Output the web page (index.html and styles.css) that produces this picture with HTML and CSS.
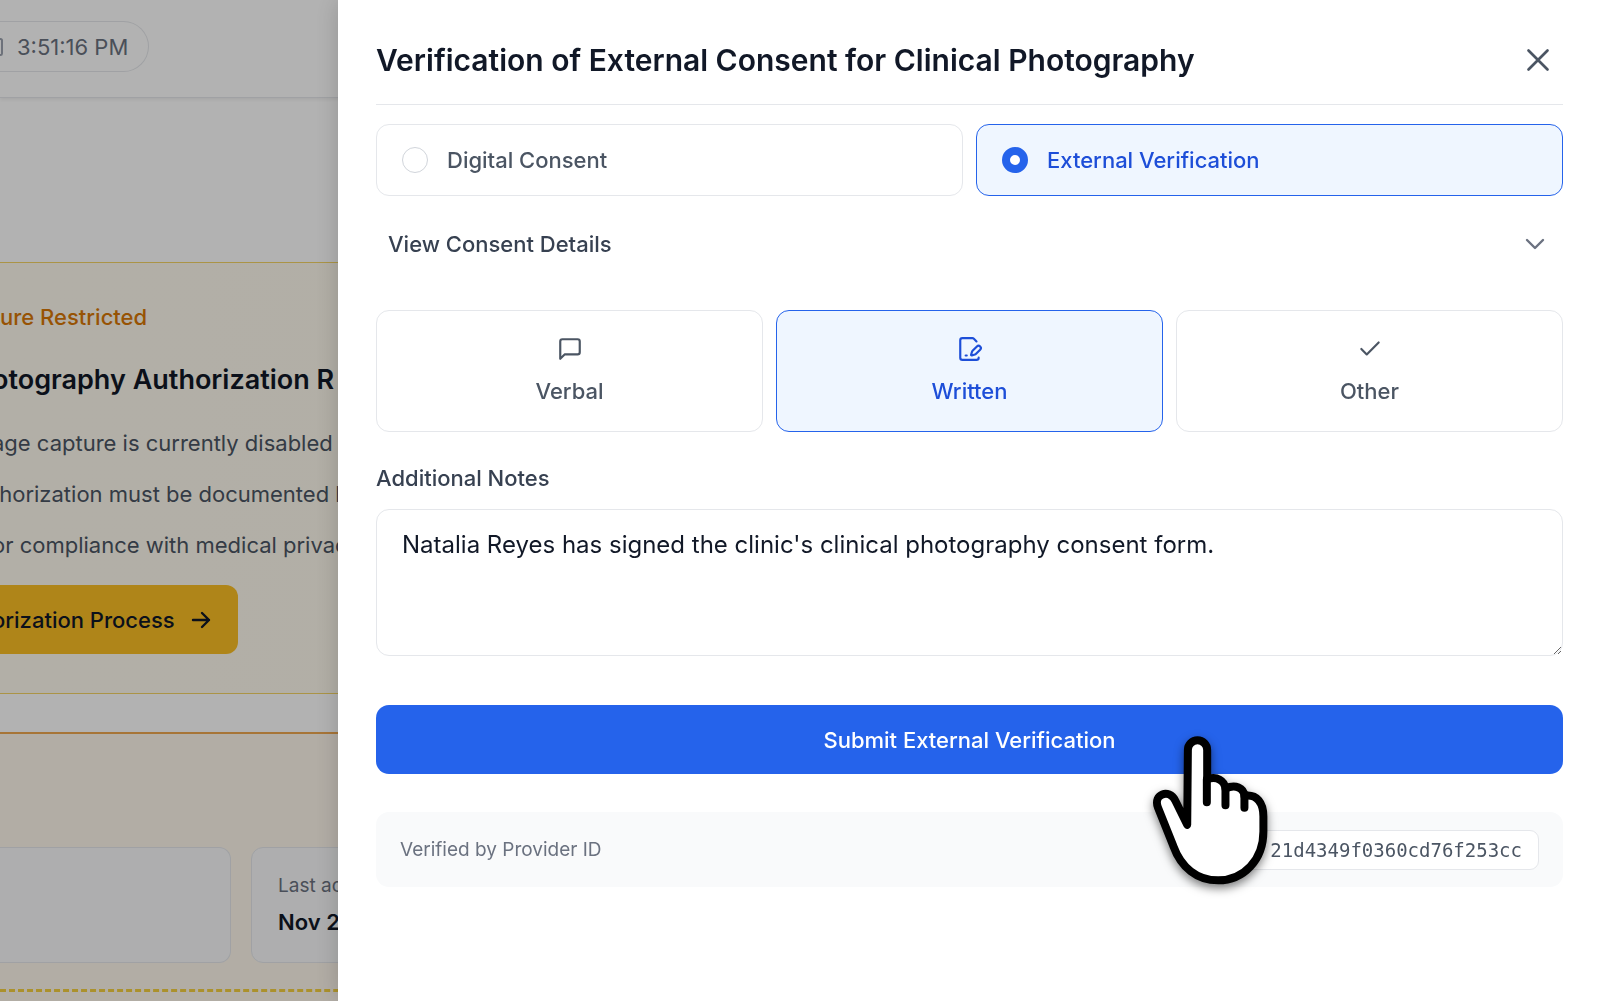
FILE: index.html
```html
<!DOCTYPE html>
<html lang="en">
<head>
    <meta charset="UTF-8">
    <meta name="viewport" content="width=device-width, initial-scale=1.0">
    <title>Clinical Photography Consent</title>
    <link rel="stylesheet" href="styles.css">
</head>
<body>
    <div class="page">
        <header class="topbar">
            <div class="clock">
                <svg class="clock-icon" width="3" height="18" viewBox="0 0 3 18" fill="none" stroke="#9ca3af" stroke-width="2"><path d="M0 1h0.5a1.5 1.5 0 0 1 1.5 1.5v13a1.5 1.5 0 0 1-1.5 1.5H0"/></svg>
                <span>3:51:16 PM</span>
            </div>
        </header>
        <section class="restricted">
            <p class="restricted-tag">ure Restricted</p>
            <div class="restricted-body">
                <h2>otography Authorization R</h2>
                <p class="restricted-text">age capture is currently disabled</p>
                <p class="restricted-text">thorization must be documented b</p>
                <p class="restricted-text">or compliance with medical privac</p>
                <button class="process-btn" type="button">
                    orization Process
                    <svg width="24" height="24" viewBox="0 0 24 24" fill="none" stroke="currentColor" stroke-width="2.4" stroke-linecap="round" stroke-linejoin="round"><path d="M4 12h16M13 5l7 7-7 7"/></svg>
                </button>
            </div>
        </section>
        <section class="activity">
            <div class="activity-cards">
                <div class="activity-card"></div>
                <div class="activity-card">
                    <span class="activity-label">Last ac</span>
                    <strong>Nov 2</strong>
                </div>
            </div>
            <div class="activity-line"></div>
        </section>
    </div>

    <div class="overlay">
        <form class="drawer">
            <div class="drawer-header">
                <h1>Verification of External Consent for Clinical Photography</h1>
                <button class="close-btn" type="button" aria-label="Close">
                    <svg width="38" height="38" viewBox="0 0 24 24" fill="none" stroke="currentColor" stroke-width="1.7" stroke-linecap="round"><path d="M18 6 6 18M6 6l12 12"/></svg>
                </button>
            </div>

            <div class="consent-types">
                <label class="consent-type">
                    <input type="radio" name="type" value="digital">
                    Digital Consent
                </label>
                <label class="consent-type selected">
                    <input type="radio" name="type" value="external" checked>
                    External Verification
                </label>
            </div>

            <button class="details-btn" type="button">
                View Consent Details
                <svg width="32" height="32" viewBox="0 0 24 24" fill="none" stroke="currentColor" stroke-width="1.8" stroke-linecap="round" stroke-linejoin="round"><path d="m6 9 6 6 6-6"/></svg>
            </button>

            <div class="methods">
                <button class="method" type="button">
                    <svg width="26" height="26" viewBox="0 0 24 24" fill="none" stroke="currentColor" stroke-width="2" stroke-linecap="round" stroke-linejoin="round"><path d="M21 15a2 2 0 0 1-2 2H7l-4 4V5a2 2 0 0 1 2-2h14a2 2 0 0 1 2 2z"/></svg>
                    Verbal
                </button>
                <button class="method selected" type="button">
                    <svg width="26" height="26" viewBox="0 0 24 24" fill="none" stroke="currentColor" stroke-width="2" stroke-linecap="round" stroke-linejoin="round"><path d="m18 5-2.414-2.414A2 2 0 0 0 14.172 2H5a2 2 0 0 0-2 2v16a2 2 0 0 0 2 2h13a2 2 0 0 0 2-2"/><path d="M21.378 12.626a1 1 0 0 0-3.004-3.004l-4.01 4.012a2 2 0 0 0-.506.854l-.837 2.87a.5.5 0 0 0 .62.62l2.87-.837a2 2 0 0 0 .854-.506z"/><path d="M8 18h1"/></svg>
                    Written
                </button>
                <button class="method" type="button">
                    <svg width="26" height="26" viewBox="0 0 24 24" fill="none" stroke="currentColor" stroke-width="2" stroke-linecap="round" stroke-linejoin="round"><path d="M20 6 9 17l-5-5"/></svg>
                    Other
                </button>
            </div>

            <label class="notes-label" for="notes">Additional Notes</label>
            <textarea class="notes" id="notes" spellcheck="false">Natalia Reyes has signed the clinic's clinical photography consent form.</textarea>

            <div class="submit-row">
                <button class="submit-btn" type="submit">Submit External Verification</button>
                <svg class="hand" width="127" height="163" viewBox="140 270 380 490" fill="#fff" stroke="#000" stroke-width="24" stroke-linecap="round" stroke-linejoin="round">
                    <path d="M262 330a29 29 0 0 1 58 0V418C350 408 372 422 375 446C405 432 430 444 432 468C470 462 489 490 489 530V575C489 660 430 722 353 722C290 722 242 684 218 618L172 503C157 463 205 445 224 482L260 555Z"/>
                    <path d="M319 418v69M375 446v50M432 468v36" fill="none"/>
                </svg>
            </div>

            <div class="provider">
                <span>Verified by Provider ID</span>
                <code>21d4349f0360cd76f253cc</code>
            </div>
        </form>
    </div>
</body>
</html>
```
FILE: styles.css
```css
* {
    box-sizing: border-box;
}
body {
    margin: 0;
    font-family: Inter, 'Liberation Sans', sans-serif;
    font-size: 22px;
    line-height: 28px;
    color: #111827;
    background: #fff;
    overflow: hidden;
}
h1, h2, p {
    margin: 0;
}
button {
    font: inherit;
    color: inherit;
    border: none;
    background: none;
    padding: 0;
    cursor: pointer;
}
svg {
    flex-shrink: 0;
}

/* page behind the drawer */
.page {
    min-height: 100vh;
    white-space: nowrap;
}
.topbar {
    display: flex;
    align-items: center;
    height: 98px;
    padding-bottom: 4px;
    border-bottom: 1px solid #e5e7eb;
    box-shadow: 0 2px 3px rgba(0, 0, 0, 0.06);
}
.clock {
    display: flex;
    align-items: center;
    gap: 14px;
    height: 51px;
    padding-right: 20px;
    border: 1px solid #e5e7eb;
    border-left: none;
    border-radius: 0 26px 26px 0;
    color: #6b7280;
}
.restricted {
    margin-top: 164px;
    height: 432px;
    padding-top: 40px;
    border: solid #f5d565;
    border-width: 1px 0;
    background: linear-gradient(90deg, #fffbf0, #fffae8);
}
.restricted-tag {
    font-weight: 500;
    color: #d97706;
}
.restricted-body {
    margin-left: -8px;
}
.restricted h2 {
    margin: 29px 0 18px;
    font-size: 27px;
    font-weight: 600;
    line-height: 40px;
}
.restricted-text {
    line-height: 51px;
    color: #4b5563;
}
.process-btn {
    display: flex;
    align-items: center;
    gap: 14px;
    height: 69px;
    margin-top: 14px;
    padding-right: 25px;
    border-radius: 0 12px 12px 0;
    background: #fbbf24;
    font-weight: 500;
}
.activity {
    margin-top: 38px;
    padding-top: 113px;
    height: 290px;
    border-top: 2px solid #f0a850;
    background: #fff8ed;
}
.activity-cards {
    display: grid;
    grid-template-columns: 231px 1fr;
    gap: 20px;
}
.activity-card {
    display: flex;
    flex-direction: column;
    gap: 8px;
    height: 116px;
    padding: 24px 26px;
    border: 1px solid #e5e7eb;
    border-radius: 12px;
    background: #f9fafb;
}
.activity-card:first-child {
    border-left: none;
    border-radius: 0 12px 12px 0;
}
.activity-label {
    font-size: 19px;
    color: #6b7280;
}
.activity-card strong {
    font-weight: 600;
}
.activity-line {
    margin-top: 26px;
    border-top: 3px dashed #f5d040;
}

/* drawer */
.overlay {
    position: fixed;
    inset: 0;
    padding-left: 338px;
    background: rgba(0, 0, 0, 0.3);
}
.drawer {
    height: 100%;
    padding: 0 37px 0 38px;
    background: #fff;
    box-shadow: 0 0 24px rgba(0, 0, 0, 0.18);
}
.drawer-header {
    display: flex;
    align-items: center;
    justify-content: space-between;
    padding: 36px 6px 20px 0;
    border-bottom: 1px solid #e5e7eb;
}
.drawer-header h1 {
    font-size: 30px;
    font-weight: 600;
    line-height: 48px;
}
.close-btn {
    height: 38px;
    color: #4b5563;
}
.consent-types {
    display: grid;
    grid-template-columns: 1fr 1fr;
    gap: 13px;
    margin-top: 19px;
}
.consent-type {
    display: flex;
    align-items: center;
    gap: 19px;
    height: 72px;
    padding: 0 25px;
    border: 1px solid #e5e7eb;
    border-radius: 13px;
    font-weight: 500;
    color: #4b5563;
}
.consent-type input {
    appearance: none;
    width: 26px;
    height: 26px;
    margin: 0;
    border: 1px solid #d1d5db;
    border-radius: 50%;
    background: #fff;
}
.consent-type input:checked {
    border: 8px solid #2563eb;
}
.consent-type.selected,
.method.selected {
    border-color: #2563eb;
    background: #eff6ff;
    color: #1d4ed8;
}
.details-btn {
    display: flex;
    align-items: center;
    justify-content: space-between;
    width: 100%;
    height: 56px;
    margin: 20px 0 38px;
    padding: 0 12px;
    font-weight: 500;
    color: #374151;
}
.details-btn svg {
    color: #6b7280;
}
.methods {
    display: grid;
    grid-template-columns: repeat(3, 1fr);
    gap: 13px;
}
.method {
    display: flex;
    flex-direction: column;
    align-items: center;
    justify-content: center;
    gap: 15px;
    height: 122px;
    padding-bottom: 2px;
    border: 1px solid #e5e7eb;
    border-radius: 13px;
    font-weight: 500;
    color: #4b5563;
}
.notes-label {
    display: block;
    margin: 32px 0 17px;
    font-weight: 500;
    color: #374151;
}
.notes {
    display: block;
    width: 100%;
    height: 147px;
    padding: 17px 25px;
    border: 1px solid #e5e7eb;
    border-radius: 13px;
    font: inherit;
    font-size: 24px;
    line-height: 36px;
    color: #111827;
    resize: vertical;
}
.submit-row {
    position: relative;
    margin: 49px 0 38px;
}
.submit-btn {
    display: block;
    width: 100%;
    height: 69px;
    border-radius: 13px;
    background: #2563eb;
    font-weight: 500;
    color: #fff;
}
.hand {
    position: absolute;
    right: 289px;
    top: 25px;
    overflow: visible;
    filter: drop-shadow(0 4px 5px rgba(0, 0, 0, 0.5));
    pointer-events: none;
}
.provider {
    display: flex;
    align-items: center;
    justify-content: space-between;
    height: 75px;
    padding: 0 24px;
    border-radius: 13px;
    background: #f9fafb;
    font-size: 19px;
    color: #6b7280;
}
.provider code {
    min-width: 300px;
    padding: 5px 16px;
    border: 1px solid #e5e7eb;
    border-radius: 9px;
    background: #fff;
    font-family: 'DejaVu Sans Mono', 'Liberation Mono', monospace;
    font-size: 19px;
    text-align: right;
    color: #4b5563;
}
```
